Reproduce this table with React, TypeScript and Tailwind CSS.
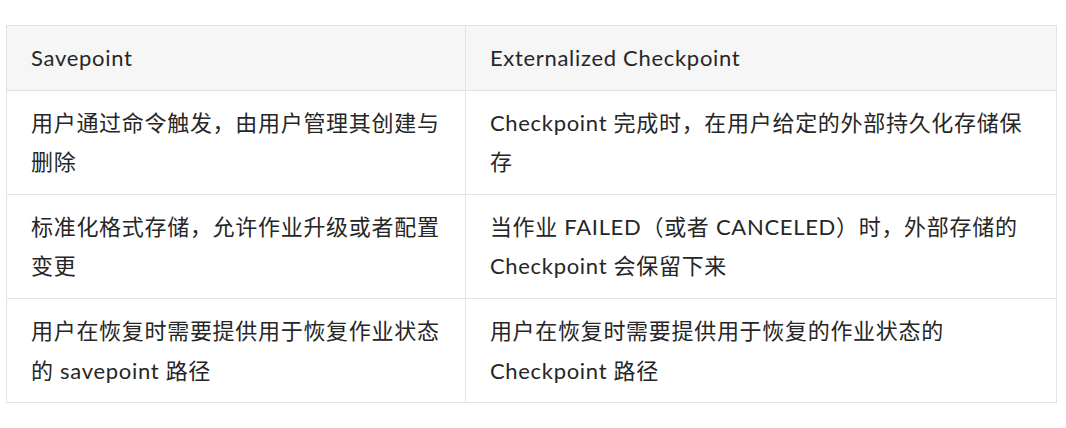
const rows: [string[], string[]][] = [
  [["用户通过命令触发，由用户管理其创建与", "删除"], ["Checkpoint 完成时，在用户给定的外部持久化存储保", "存"]],
  [["标准化格式存储，允许作业升级或者配置", "变更"], ["当作业 FAILED（或者 CANCELED）时，外部存储的", "Checkpoint 会保留下来"]],
  [["用户在恢复时需要提供用于恢复作业状态", "的 savepoint 路径"], ["用户在恢复时需要提供用于恢复的作业状态的", "Checkpoint 路径"]],
];

function Cell({ lines, last }: { lines: string[]; last?: boolean }) {
  return (
    <td className={`border border-[#e3e3e3] px-6 py-3 align-top ${last ? "w-[592px]" : "w-[459px]"}`}>
      {lines.map((l) => (
        <div key={l} className="whitespace-nowrap">
          {l}
        </div>
      ))}
    </td>
  );
}

export default function App() {
  return (
    <div className="bg-white w-[1066px] h-[428px] pt-[25px] pl-[6px]">
      <table
        className="border-collapse w-[1051px] text-[22px] leading-[39.6px] tracking-[0.7px] text-[#262626] [font-family:Lato,'Noto_Sans_CJK_SC',sans-serif]"
      >
        <thead>
          <tr className="bg-[#f6f6f6] text-left">
            <th className="border border-[#e3e3e3] px-6 py-3 font-normal w-[459px]">Savepoint</th>
            <th className="border border-[#e3e3e3] px-6 py-3 font-normal w-[592px]">Externalized Checkpoint</th>
          </tr>
        </thead>
        <tbody>
          {rows.map(([a, b], i) => (
            <tr key={i}>
              <Cell lines={a} />
              <Cell lines={b} last />
            </tr>
          ))}
        </tbody>
      </table>
    </div>
  );
}
